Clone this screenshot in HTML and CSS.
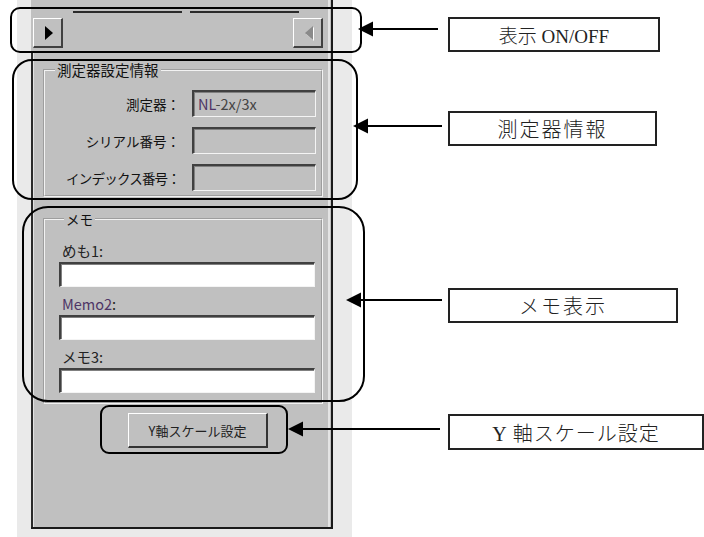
FILE: index.html
```html
<!DOCTYPE html>
<html lang="ja">
<head>
    <meta charset="UTF-8">
    <meta name="viewport" content="width=device-width, initial-scale=1.0">
    <title>測定器設定パネル</title>
    <link rel="stylesheet" href="styles.css">
</head>
<body>
    <div class="stage">
        <div class="window">
            <div class="panel">
                <div class="tabs">
                    <span class="tab"></span>
                    <span class="tab"></span>
                </div>
                <div class="scroll-row">
                    <button class="arrow-btn"><span class="tri tri-right"></span></button>
                    <button class="arrow-btn" disabled><span class="tri tri-left"></span></button>
                </div>
                <div class="panel-body">
                    <fieldset class="group info">
                        <legend>測定器設定情報</legend>
                        <div class="info-grid">
                            <label>測定器：</label>
                            <div class="field ro"><span class="purple">NL</span>-2x/3x</div>
                            <label>シリアル番号：</label>
                            <div class="field ro"></div>
                            <label class="narrow">インデックス番号：</label>
                            <div class="field ro"></div>
                        </div>
                    </fieldset>

                    <fieldset class="group memo">
                        <legend>メモ</legend>
                        <div class="memo-row">
                            <label>めも1:</label>
                            <input type="text" class="field">
                        </div>
                        <div class="memo-row">
                            <label><span class="purple">Memo2</span>:</label>
                            <input type="text" class="field">
                        </div>
                        <div class="memo-row">
                            <label>メモ3:</label>
                            <input type="text" class="field">
                        </div>
                    </fieldset>

                    <button class="scale-btn">Y軸スケール設定</button>
                </div>
            </div>
        </div>

        <!-- annotations -->
        <div class="callout c1"></div>
        <div class="callout c2"></div>
        <div class="callout c3"></div>
        <div class="callout c4"></div>

        <svg class="arrows" width="704" height="537" viewBox="0 0 704 537">
            <g stroke="#000" stroke-width="2">
                <line x1="372" y1="29" x2="438" y2="29"/>
                <line x1="367" y1="126" x2="442" y2="126"/>
                <line x1="360" y1="300" x2="442" y2="300"/>
                <line x1="302" y1="429" x2="440" y2="429"/>
            </g>
            <g fill="#000">
                <polygon points="358,29 373,21.5 373,36.5"/>
                <polygon points="353,126 368,118.5 368,133.5"/>
                <polygon points="346,300 361,292.5 361,307.5"/>
                <polygon points="288,429 303,421.5 303,436.5"/>
            </g>
        </svg>

        <div class="note n1">表示 ON/OFF</div>
        <div class="note n2">測定器情報</div>
        <div class="note n3">メモ表示</div>
        <div class="note n4">Y 軸スケール設定</div>
    </div>
</body>
</html>
```

FILE: styles.css
```css
body {
    margin: 0;
    background: #fff;
    font-family: "Noto Sans CJK JP", "DejaVu Sans", sans-serif;
}
.stage {
    position: relative;
    width: 704px;
    height: 537px;
    overflow: hidden;
}
.window {
    margin-left: 17px;
    width: 335px;
    height: 537px;
    padding-left: 14px;
    box-sizing: border-box;
    background: #eaeaea;
}
.panel {
    width: 302px;
    height: 529px;
    box-sizing: border-box;
    display: flex;
    flex-direction: column;
    background: #c0c0c0;
    border-right: 2px solid #1a1a1a;
    border-bottom: 2px solid #1a1a1a;
    box-shadow: inset -1px 0 0 #c0c0c0, inset -3px 0 0 #e4e4e4;
}
.tabs {
    display: flex;
    gap: 8px;
    height: 13px;
    padding-left: 42px;
    box-sizing: border-box;
}
.tab {
    width: 109px;
    height: 13px;
    box-sizing: border-box;
    border-bottom: 2px solid #2a2a2a;
}
.scroll-row {
    display: flex;
    justify-content: space-between;
    padding: 5px 8px 3px 2px;
}
.arrow-btn {
    width: 30px;
    height: 30px;
    padding: 0 0 0 3px;
    display: flex;
    align-items: center;
    justify-content: center;
    background: #c0c0c0;
    border-top: 1px solid #fff;
    border-left: 1px solid #fff;
    border-right: 2px solid #404040;
    border-bottom: 2px solid #404040;
}
.tri {
    width: 0;
    height: 0;
    border-top: 7px solid transparent;
    border-bottom: 7px solid transparent;
}
.tri-right {
    border-left: 8px solid #000;
}
.tri-left {
    border-right: 8px solid #8a8a8a;
    filter: drop-shadow(1px 1px 0 #fff);
}
.panel-body {
    flex: 1;
    display: flex;
    flex-direction: column;
    align-items: flex-start;
    border-left: 2px solid #2a2a2a;
    box-shadow: inset 1px 0 0 #e2e2e2;
}
.group {
    width: 280px;
    min-width: 0;
    box-sizing: border-box;
    margin: 0 0 0 10px;
    border: 2px groove #f2f2f2;
    font-size: 13.5px;
    color: #111;
}
.group legend {
    font-size: 14.5px;
    line-height: 16px;
    padding: 0 2px;
    color: #111;
}
.info {
    margin-top: 11px;
    padding: 12px 0 4px 0;
}
.info legend {
    margin-left: 10px;
}
.info-grid {
    display: grid;
    grid-template-columns: 135px 124px;
    grid-auto-rows: 27px;
    column-gap: 12px;
    row-gap: 10px;
    align-items: center;
}
.info-grid label {
    text-align: right;
    white-space: nowrap;
}
.info-grid .narrow {
    letter-spacing: -0.8px;
}
.field {
    box-sizing: border-box;
    height: 27px;
    border-top: 2px solid #404040;
    border-left: 2px solid #404040;
    border-right: 1px solid #f4f4f4;
    border-bottom: 1px solid #f4f4f4;
    box-shadow: inset 1px 1px 0 #808080;
}
.field.ro {
    background: #c0c0c0;
    padding: 1px 4px;
    font-size: 14.5px;
    line-height: 22px;
    color: #444;
}
.purple {
    color: #4e3566;
}
.memo {
    margin-top: 14px;
    padding: 16px 0 9px 14px;
}
.memo legend {
    margin-left: 5px;
    font-size: 13.5px;
}
.memo-row {
    display: flex;
    flex-direction: column;
    align-items: flex-start;
}
.memo-row + .memo-row {
    margin-top: 9px;
}
.memo-row label {
    line-height: 16px;
    margin: 0 0 3px 3px;
    font-size: 14.5px;
    color: #222;
}
.memo-row input {
    width: 256px;
    height: 25px;
    margin: 0;
    padding: 0 4px;
    background: #fff;
    outline: none;
}
.scale-btn {
    margin: 9px 0 0 95px;
    width: 140px;
    height: 35px;
    padding: 0;
    background: #c0c0c0;
    font-family: "Noto Sans CJK JP", sans-serif;
    font-size: 13px;
    color: #222;
    border-top: 1px solid #fff;
    border-left: 1px solid #fff;
    border-right: 2px solid #333;
    border-bottom: 2px solid #333;
}

/* annotation overlay */
.callout {
    position: absolute;
    box-sizing: border-box;
    border: 2px solid #000;
}
.c1 { left: 10px; top: 7px; width: 352px; height: 46px; border-radius: 10px; }
.c2 { left: 12px; top: 59px; width: 346px; height: 141px; border-radius: 20px; }
.c3 { left: 22px; top: 206px; width: 343px; height: 196px; border-radius: 26px; }
.c4 { left: 100px; top: 405px; width: 188px; height: 49px; border-radius: 9px; }
.arrows {
    position: absolute;
    left: 0;
    top: 0;
}
.note {
    position: absolute;
    left: 448px;
    box-sizing: border-box;
    height: 35px;
    border: 2px solid #222;
    background: #fff;
    display: flex;
    align-items: center;
    justify-content: center;
    font-family: "Liberation Serif", "Noto Sans CJK JP", serif;
    font-size: 20px;
    font-weight: 300;
    color: #222;
    white-space: nowrap;
}
.n1 { top: 17px; width: 212px; font-size: 19px; }
.n2 { top: 111px; width: 209px; letter-spacing: 2px; }
.n3 { top: 288px; width: 230px; letter-spacing: 2px; }
.n4 { top: 414px; width: 256px; height: 36px; letter-spacing: 1px; }
```
